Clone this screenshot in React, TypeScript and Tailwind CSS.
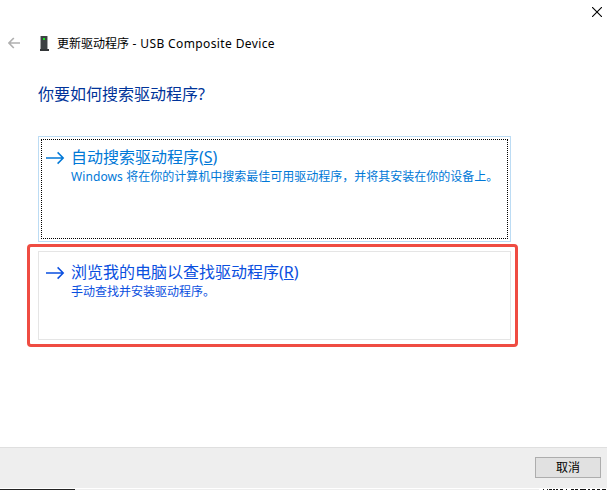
import React from 'react';

const cjk = "font-['Noto_Sans','Noto_Sans_CJK_SC',sans-serif]";

function Arrow({ className }: { className: string }) {
  return (
    <svg className={className} width="19" height="14" viewBox="0 0 19 14" fill="none" stroke="currentColor" strokeWidth="1.5">
      <path d="M0 7H17.2M11.6 1.4L17.2 7L11.6 12.6" />
    </svg>
  );
}

// Narrow strip of the window behind, visible under the dialog.
const marks: [number, number][] = [
  [543, 1], [547, 1], [549, 3], [553, 2], [556, 2], [560, 3], [566, 1], [571, 3], [575, 3], [580, 6], [588, 2], [592, 3], [597, 3], [602, 4],
];

export default function App() {
  return (
    <div className={`flex h-[490px] w-[607px] flex-col overflow-hidden bg-white text-black ${cjk}`}>
      <div className="flex h-[26px] justify-end pt-[7px] pr-[5px]">
        <svg width="10" height="10" viewBox="0 0 10 10" stroke="#000" strokeWidth="1.1">
          <path d="M0 0L10 10M10 0L0 10" />
        </svg>
      </div>
      <header className="flex h-9 items-center pl-2">
        <svg className="-mt-[2px]" width="12" height="12" viewBox="0 0 12 12" fill="none" stroke="#b0b0b0" strokeWidth="1.7">
          <path d="M12 6H1M5.8 1L.9 6L5.8 11" />
        </svg>
        <svg className="ml-[19px]" width="11" height="16" viewBox="0 0 11 16" shapeRendering="crispEdges">
          <path d="M1 0H9V13H1Z" fill="#a5a7a8" />
          <path d="M2 0H8V13H2Z" fill="#3d4143" />
          <path d="M1 13H10V15H1Z" fill="#333638" />
          <path d="M4 2H6V4H4Z" fill="#19e622" />
        </svg>
        <h1 className="ml-[7px] flex whitespace-pre text-[12px] leading-4">
          <span>更新驱动程序</span>
          <span className="tracking-[0.38px]"> - USB Composite Device</span>
        </h1>
      </header>
      <main className="flex h-[385px] flex-col pl-[38px] pt-5">
        <h2 className="text-[16px] leading-6 text-[#003399]">你要如何搜索驱动程序?</h2>
        <button className="mt-[30px] h-[106px] w-[473px] border border-[#bcdcf4] p-[2px] text-left text-[#0078d7]">
          <span className="flex h-full border border-dotted border-black pl-1 pt-[7px]">
            <Arrow className="mt-1" />
            <span className="ml-[6px] flex flex-col whitespace-nowrap">
              <span className="text-[16px] leading-5">自动搜索驱动程序(<u>S</u>)</span>
              <span className="text-[12px] leading-5"><span className="tracking-[0.1px]">Windows </span>将在你的计算机中搜索最佳可用驱动程序，并将其安装在你的设备上。</span>
            </span>
          </span>
        </button>
        <div className="-ml-[11px] mt-[2px] h-[103px] w-[491px] rounded-[4px] border-[3px] border-[#ef4c42] px-2 py-1">
          <button className="flex h-[89px] w-[473px] border border-[#e5e5e5] pl-[7px] pt-[10px] text-left text-[#0a4fe0]">
            <Arrow className="mt-1" />
            <span className="ml-[6px] flex flex-col whitespace-nowrap">
              <span className="text-[16px] leading-5">浏览我的电脑以查找驱动程序(<u>R</u>)</span>
              <span className="text-[12px] leading-5">手动查找并安装驱动程序。</span>
            </span>
          </button>
        </div>
      </main>
      <footer className="flex h-[41px] justify-end border-t border-[#dfdfdf] bg-[#eeeeee] pr-[6px] pt-[9px]">
        <button className="flex h-[21px] w-[66px] items-center justify-center border border-[#adadad] bg-[#e1e1e1] text-[12px] leading-4">取消</button>
      </footer>
      <svg width="607" height="2" viewBox="0 0 607 2" shapeRendering="crispEdges">
        <path d="M0 1H75V2H0Z" fill="#222" />
        <path d="M75 1H539V2H75Z" fill="#eee" />
        {marks.map(([x, w]) => <rect key={x} x={x} y="1" width={w} height="1" fill="#111" />)}
      </svg>
    </div>
  );
}
